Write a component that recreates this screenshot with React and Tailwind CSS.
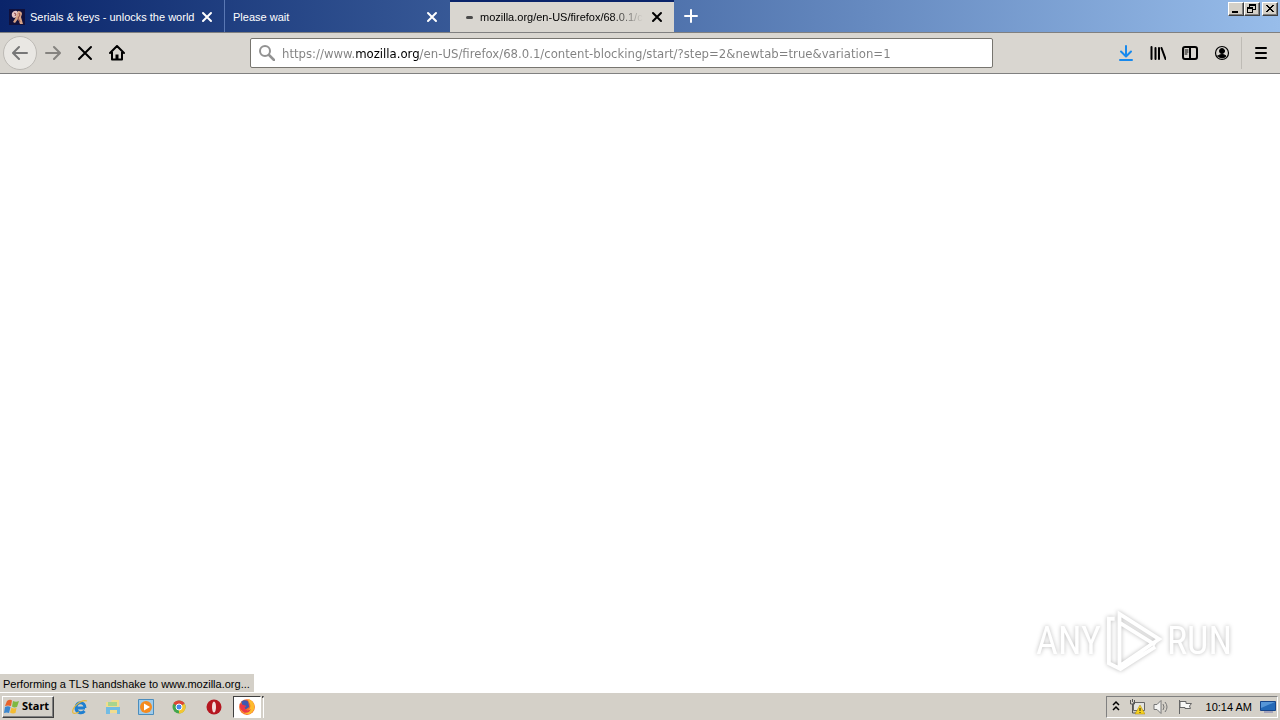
import React from 'react';

const URL = 'https://www.mozilla.org/en-US/firefox/68.0.1/content-blocking/start/?step=2&newtab=true&variation=1';

const stroke = { fill: 'none', stroke: 'currentColor', strokeWidth: 2, strokeLinecap: 'round', strokeLinejoin: 'round' };

function Cross() {
  return (
    <svg width="16" height="16" viewBox="0 0 16 16" {...stroke}>
      <path d="M4 4l8 8M12 4l-8 8" />
    </svg>
  );
}

function ToolButton({ label, className = '', children }) {
  return (
    <button aria-label={label} className={'flex h-8 w-8 shrink-0 items-center justify-center ' + className}>
      <svg width="16" height="16" viewBox="0 0 16 16" {...stroke}>{children}</svg>
    </button>
  );
}

function WindowButton({ label, className = '', children }) {
  return (
    <button
      aria-label={label}
      className={'h-[14px] w-4 border border-t-white border-l-white border-r-[#404040] border-b-[#404040] bg-[#d4d0c8] text-black shadow-[inset_-1px_-1px_#808080] ' + className}
    >
      <svg width="14" height="12" viewBox="0 0 14 12" fill="none" stroke="currentColor" shapeRendering="crispEdges">{children}</svg>
    </button>
  );
}

function TitleBar() {
  return (
    <header className="flex h-8 bg-linear-to-r from-[#0a246a] to-[#98bdea] text-[11px] text-white">
      <div className="flex w-[225px] shrink-0 items-center border-r border-[#5a78b4] pt-0.5 pr-[9px] pl-[9px]">
        <svg className="mr-[5px] shrink-0" width="16" height="16" viewBox="0 0 16 16">
          <path d="M0 0h16v16H0z" fill="#10103c" />
          <path d="M3 4q2-3 5-2l2 3-2 3-3 1q-3-1-2-5z" fill="#e3c3c4" />
          <path d="M9 2q4 0 4 3l-1 3 2 7h-3l-2-5-3 4-2-1 3-5z" fill="#d7a487" />
          <path d="M5 4l2 1-1 2M10 4l1 2-2 3 2 4" stroke="#8e4a48" fill="none" />
        </svg>
        <span className="grow whitespace-nowrap">Serials &amp; keys - unlocks the world</span>
        <button aria-label="Close tab"><Cross /></button>
      </div>
      <div className="flex w-[225px] shrink-0 items-center pt-0.5 pr-[10px] pl-2">
        <span className="grow whitespace-nowrap">Please wait</span>
        <button aria-label="Close tab"><Cross /></button>
      </div>
      <div className="flex w-[224px] shrink-0 items-center border-t-2 border-[#0a246a] bg-[#d9d6d0] pr-[9px] pl-4 text-black">
        <span className="mr-[7px] h-[3px] w-[7px] shrink-0 rounded-full bg-[#4a4a4a]" />
        <span className="whitespace-nowrap mask-r-from-80% mask-r-to-100%">mozilla.org/en-US/firefox/68.0.1/c</span>
        <button aria-label="Close tab" className="ml-auto"><Cross /></button>
      </div>
      <button aria-label="New tab" className="flex w-[34px] items-center justify-center">
        <svg width="16" height="16" viewBox="0 0 16 16" {...stroke}><path d="M2 8h12M8 2v12" /></svg>
      </button>
      <div className="ml-auto flex items-start pt-0.5 pr-0.5">
        <WindowButton label="Minimize"><path d="M3 9h6" strokeWidth="2" /></WindowButton>
        <WindowButton label="Restore">
          <path d="M5 1.500h6M4.500 1v3M10.500 2v5M8 6.500h3M2 4.500h6M2.500 5v5M7.500 5v5M2 9.500h6" />
          <path d="M4 2.500h7M2 5.500h6" />
        </WindowButton>
        <WindowButton label="Close" className="ml-0.5"><path d="M3 2l7 7M4 2l7 7M10 2l-7 7M11 2l-7 7" /></WindowButton>
      </div>
    </header>
  );
}

function NavBar() {
  return (
    <nav className="flex h-[42px] items-center border-y border-[#808080] bg-[#d9d6d0] px-[3px] text-black">
      <button aria-label="Back" className="flex h-[34px] w-[34px] shrink-0 items-center justify-center rounded-full border border-[#bdbab5] bg-[#e9e7e3] text-[#777]">
        <svg width="16" height="16" viewBox="0 0 16 16" {...stroke}><path d="M15 8H1.500M7 2L1 8l6 6" /></svg>
      </button>
      <ToolButton label="Forward" className="text-[#85837f]"><path d="M1 8h13.500M9 2l6 6-6 6" /></ToolButton>
      <ToolButton label="Stop"><path d="M2 2l12 12M14 2L2 14" /></ToolButton>
      <ToolButton label="Home">
        <path d="M1 8l7-7 7 7M3 7v7.500h10V7" />
        <path d="M8 14V9.500" strokeWidth="3" strokeLinecap="butt" />
      </ToolButton>
      <label className="mx-auto flex h-[30px] max-w-[743px] grow items-center rounded-[2px] border border-[#77756f] bg-white pl-2">
        <svg className="mr-[7px] shrink-0 text-[#929292]" width="16" height="16" viewBox="0 0 16 16" {...stroke}>
          <circle cx="6" cy="6" r="5" /><path d="M10 10l5 5" strokeWidth="2.500" />
        </svg>
        <input
          aria-label="Address"
          defaultValue={URL}
          className="w-0 grow bg-[linear-gradient(90deg,#808080_74px,#000_74px,#000_138px,#808080_138px)] bg-clip-text pt-px font-['DejaVu_Sans_Condensed',sans-serif] text-[13px] text-transparent outline-none"
        />
      </label>
      <ToolButton label="Downloads" className="text-[#1789ed]"><path d="M8 1v10M3 6.500l5 5 5-5M2 15h12" /></ToolButton>
      <ToolButton label="Library"><path d="M1.500 2v12M5.500 3v11M9 3v11M11.500 3l4 11" /></ToolButton>
      <ToolButton label="Sidebars">
        <rect x="1" y="2" width="14" height="12" rx="2" /><path d="M8 2v12" /><path d="M3 5h3M3 7h3M3 9h2" strokeWidth="1" />
      </ToolButton>
      <ToolButton label="Account">
        <circle cx="8" cy="8" r="6.500" strokeWidth="1.200" />
        <circle cx="8" cy="6" r="2.500" fill="currentColor" strokeWidth="1" />
        <path d="M4 11c2-2 6-2 8 0-2 2.500-6 2.500-8 0z" fill="currentColor" strokeWidth="1" />
      </ToolButton>
      <span className="mx-[3px] h-8 w-px bg-[#bebbb5]" />
      <ToolButton label="Menu"><path d="M3 3h10M3 8h10M3 13h10" /></ToolButton>
    </nav>
  );
}

function Watermark() {
  return (
    <div className="absolute right-12 bottom-5 flex items-center gap-1 font-['Roboto_Condensed','Noto_Sans_ExtraCondensed','Open_Sans_Condensed','Roboto',sans-serif] text-[38px] leading-none text-white drop-shadow-[0_0_2px_#bbb]">
      <span>ANY</span>
      <svg width="58" height="62" viewBox="0 0 60 64" fill="none" stroke="currentColor" strokeWidth="4">
        <path d="M15 4l41 26-41 28zM15 13l37 23M10 9H4v46l12 6 36-23" />
      </svg>
      <span>RUN</span>
    </div>
  );
}

function TaskBar() {
  return (
    <footer className="flex h-7 items-center border-t border-white bg-[#d4d0c8] px-0.5 text-[11px] text-black">
      <button className="flex h-[22px] w-[52px] items-center gap-0.5 border border-t-white border-l-white border-r-[#404040] border-b-[#404040] pl-px font-['Noto_Sans',sans-serif] font-bold shadow-[inset_-1px_-1px_#808080]">
        <svg className="shrink-0" width="16" height="16" viewBox="0 0 16 16">
          <path d="M3 2q3-2 5-.5L7 7Q4 6 1 7z" fill="#e8632b" />
          <path d="M9 2q3 1.500 6 0l-2 6q-3 1-5-.5z" fill="#7fb840" />
          <path d="M1 8q3-1.500 5.500 0L5 14q-2-1-5 0z" fill="#3c87cf" />
          <path d="M7.500 8.500q2 1.500 5 .5l-1 5q-3 1-5.500-.5z" fill="#f4bc32" />
        </svg>
        Start
      </button>
      <div className="ml-[18px] flex items-center gap-[17px]">
        <svg width="16" height="16" viewBox="0 0 16 16" fill="none">
          <path d="M13 9H4M13 9c0-7-9-7-9 0 0 5 6 6 8.500 3" stroke="#1f7fd0" strokeWidth="3" />
          <path d="M1 14C-1 9 9 0 15 2M1 14c2 1 4 0 6-1" stroke="#e6b83a" strokeWidth="1.200" />
        </svg>
        <svg width="16" height="16" viewBox="0 0 16 16">
          <path d="M1 3h5l1-2h7v13H1z" fill="#f0dc8f" /><path d="M3 3h9v4H3z" fill="#a8d58e" />
          <path d="M1 8h14v7h-3v-4H5v4H1z" fill="#72bce4" />
        </svg>
        <svg width="16" height="16" viewBox="0 0 16 16">
          <path d="M.5.500h15v15H.5z" fill="#9fcbea" stroke="#4b8dbd" />
          <circle cx="8" cy="8" r="6" fill="#f58a1e" /><path d="M6 4.500v7L12 8z" fill="#fff" />
        </svg>
        <svg width="16" height="16" viewBox="0 0 16 16">
          <circle cx="8" cy="8" r="6.500" fill="#43a64c" />
          <path d="M8 8L2.400 4.700A6.500 6.500 0 0 1 13.600 4.700z" fill="#de4636" />
          <path d="M8 8l5.600-3.300A6.500 6.500 0 0 1 8 14.500z" fill="#f4c631" />
          <circle cx="8" cy="8" r="3" fill="#4688ec" stroke="#fff" />
        </svg>
        <svg width="18" height="16" viewBox="0 0 18 16">
          <ellipse cx="10" cy="8" rx="7.500" ry="7.500" fill="#b51620" /><ellipse cx="10" cy="8" rx="2" ry="5.500" fill="#f3dddd" />
        </svg>
      </div>
      <button aria-label="Firefox" className="ml-[11px] flex h-[22px] w-7 items-center justify-center border border-t-[#404040] border-l-[#404040] border-r-white border-b-white bg-white">
        <svg width="18" height="18" viewBox="0 0 16 16">
          <circle cx="8" cy="8" r="7" fill="#f7682a" />
          <path d="M9 1c6 1 8 9 2 13-3 1-7 0-9-4 4 3 9 1 9-3 0-3-2-3-2-6z" fill="#fdbb2d" />
          <path d="M3 3q3-2 6 0l1 5-3 2-3-2z" fill="#4058b0" />
          <path d="M1.500 5l3 1 3 1-2 2 3 2 3-1q-2 4-6 3-4-2-4-8z" fill="#ec3746" />
        </svg>
      </button>
      <span className="ml-px h-[22px] w-0.5 border-t-2 border-r border-[#404040] border-r-white" />
      <div className="ml-auto flex h-[22px] items-center border border-t-[#808080] border-l-[#808080] border-r-white border-b-white pr-px pl-1">
        <svg width="10" height="16" viewBox="0 0 10 16" fill="none" stroke="#000" strokeWidth="1.500"><path d="M2 6l3-3 3 3M2 11l3-3 3 3" /></svg>
        <svg className="ml-2" width="16" height="16" viewBox="0 0 16 16" fill="none">
          <path d="M4.500 3.500h11v8h-11z" fill="#e4e4df" stroke="#666" /><path d="M1.500 1v4h4V1M3.500 5v9H8M3.500 0v3" stroke="#555" />
          <path d="M11 6l5 9H6z" fill="#f7d21e" stroke="#a98710" strokeWidth=".5" /><path d="M11 9v3M11 13v1" stroke="#222" />
        </svg>
        <svg className="ml-2" width="16" height="16" viewBox="0 0 16 16" fill="none" stroke="#777">
          <path d="M1 5.500h3l4-4v13l-4-4H1z" fill="#f4f4f2" /><path d="M10 5q2 3 0 6M12 3q4 5 0 10" />
        </svg>
        <svg className="ml-2" width="16" height="16" viewBox="0 0 16 16" stroke="#666" fill="#f8f8f6">
          <path d="M2.500 1v14" /><path d="M3 2.500h6v2h5.500l-2 2.500 1 2.500H8v-1H3z" />
        </svg>
        <span className="ml-[13px] pt-px whitespace-nowrap">10:14 AM</span>
        <svg className="ml-2" width="16" height="16" viewBox="0 0 16 16">
          <path d="M.5 2.500h15v9H.5z" fill="#2469b7" stroke="#17458a" /><path d="M1 3h14L1 9z" fill="#5796d7" /><path d="M4 13h9" stroke="#77a" />
        </svg>
      </div>
    </footer>
  );
}

function App() {
  return (
    <div className="flex h-screen flex-col bg-white font-['Liberation_Sans',sans-serif]">
      <TitleBar />
      <NavBar />
      <main className="relative grow">
        <Watermark />
        <p className="absolute bottom-0 left-0 bg-[#d4d0c8] pt-0.5 pr-1 pl-[3px] text-[11px] leading-4 whitespace-nowrap text-black">
          Performing a TLS handshake to www.mozilla.org...
        </p>
      </main>
      <TaskBar />
    </div>
  );
}

export default App;
